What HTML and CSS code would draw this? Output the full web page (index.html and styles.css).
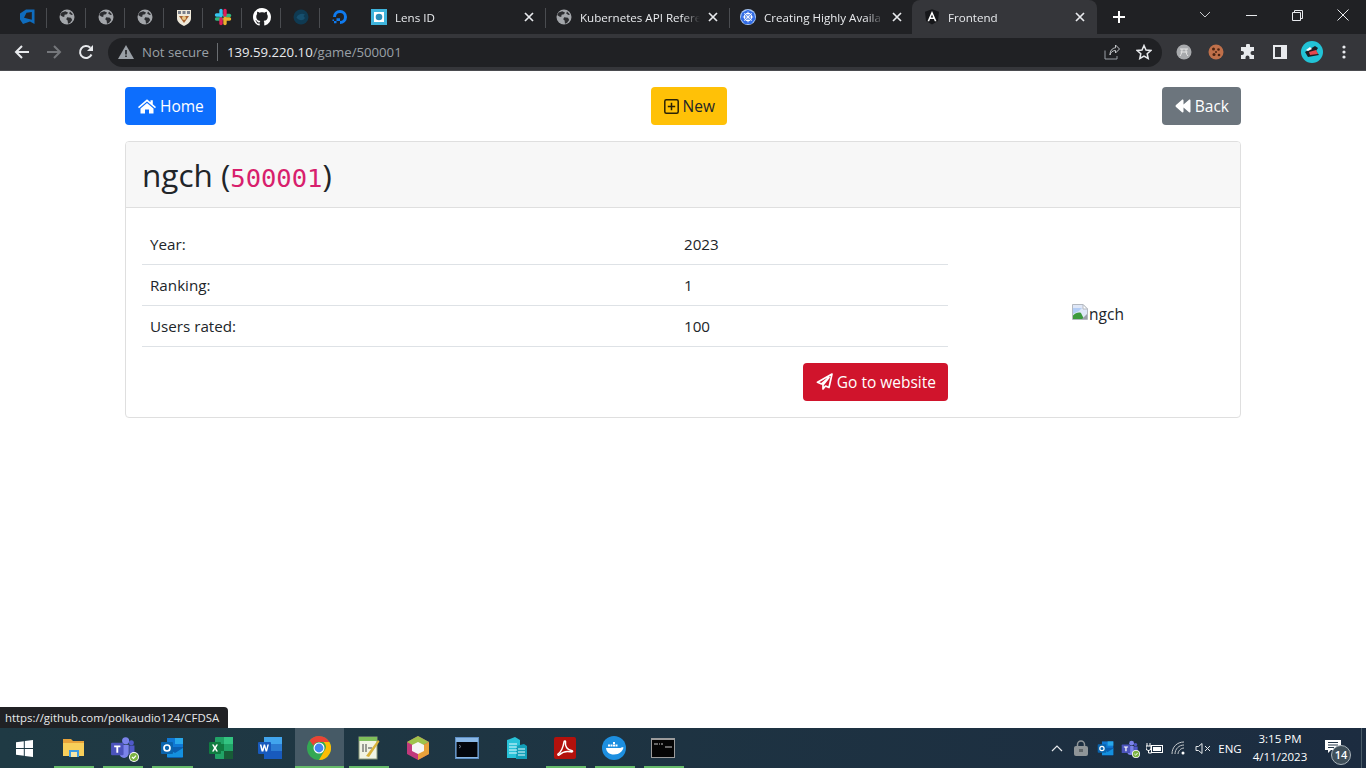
FILE: index.html
```html
<!DOCTYPE html>
<html lang="en">
<head>
<meta charset="utf-8">
<title>Frontend</title>
<link rel="stylesheet" href="styles.css">
</head>
<body>
<svg class="defs" width="0" height="0">
  <symbol id="globe" viewBox="0 0 16 16">
    <circle cx="8" cy="8" r="7.500" fill="#a3a6aa"/>
    <path d="M2.600 3.400 6.200 2.200 9 3.400 8 5.200 5.600 5.800 5.200 8 3.200 7.400 1.200 6ZM8.200 8.200 12 8.800 13.200 11 11 14 9 14.800 8.600 11.600 7.200 10.200ZM11 2.400l3 3-1.600.6-2.200-1.600Z" fill="#2c2d30"/>
  </symbol>
  <symbol id="x" viewBox="0 0 12 12">
    <path d="M2 2l8 8M10 2l-8 8" stroke="#e8eaed" stroke-width="1.700" fill="none"/>
  </symbol>
  <symbol id="teams" viewBox="0 0 24 24">
    <circle cx="15" cy="4.500" r="3.400" fill="#7b83eb"/>
    <circle cx="20.500" cy="6.500" r="2.400" fill="#5059c9"/>
    <path d="M9 8.500h9v8a4.500 4.500 0 0 1-9 0Z" fill="#7b83eb"/>
    <path d="M18.500 9h5v6a3 3 0 0 1-5 2Z" fill="#5059c9"/>
    <rect x="1" y="6.500" width="12" height="12" rx="1" fill="#4b53bc"/>
    <path d="M4 9h6v1.700H7.900V16H6.100V10.700H4Z" fill="#fff"/>
  </symbol>
  <symbol id="outlook" viewBox="0 0 24 24">
    <rect x="7" y="2" width="16" height="11" fill="#0f78d4"/>
    <rect x="15" y="2" width="8" height="6" fill="#28a8ea"/>
    <path d="M7 11h16v10a1 1 0 0 1-1 1H8a1 1 0 0 1-1-1Z" fill="#0a5fb0"/>
    <path d="M7 12l8 5 8-5v9H7Z" fill="#1490df"/>
    <rect x="1" y="6" width="12" height="12" rx="1" fill="#0a64ad"/>
    <circle cx="7" cy="12" r="3" fill="none" stroke="#fff" stroke-width="1.700"/>
  </symbol>
  <symbol id="check" viewBox="0 0 10 10">
    <circle cx="5" cy="5" r="5" fill="#fff"/>
    <circle cx="5" cy="5" r="4" fill="#7cb342"/>
    <path d="M3 5l1.500 1.500L7 3.700" stroke="#fff" fill="none" stroke-width="1.200"/>
  </symbol>
</svg>

<header class="browser">
  <div class="tabstrip">
    <div class="pinned">
      <span class="pin"><svg width="18" height="18" viewBox="0 0 18 18"><path d="M7 1.500 15.500 1.500V16L11 13.500 4 16 1 11.500V5.500Z" fill="#0f6cbd"/><path d="M7.500 4.800 12.800 4V11.800L5 9.800Z" fill="#202124"/></svg></span>
      <span class="pin"><svg width="16" height="16"><use href="#globe"/></svg></span>
      <span class="pin"><svg width="16" height="16"><use href="#globe"/></svg></span>
      <span class="pin"><svg width="16" height="16"><use href="#globe"/></svg></span>
      <span class="pin"><svg width="14" height="17" viewBox="0 0 14 17"><path d="M0 1h14v8c0 4-3 6-7 8-4-2-7-4-7-8Z" fill="#efe9da"/><path d="M1 2h3v3H1ZM5.500 2h3v3h-3ZM10 2h3v3h-3Z" fill="#7a7f8a"/><path d="M2 7h10l-5 7Z" fill="#a8612f"/><circle cx="7" cy="9" r="2" fill="#e9c98a"/></svg></span>
      <span class="pin"><svg width="18" height="18" viewBox="0 0 18 18"><g fill="none" stroke-width="3.400" stroke-linecap="round"><path d="M7 2.500v5" stroke="#36c5f0"/><path d="M2.500 7H7" stroke="#36c5f0"/><path d="M15.500 7.500h-5" stroke="#2eb67d"/><path d="M11 2.500V7" stroke="#e01e5a"/><path d="M11 15.500v-5" stroke="#ecb22e"/><path d="M15.500 11H11" stroke="#ecb22e"/><path d="M2.500 11h5" stroke="#2eb67d"/><path d="M7 15.500V11" stroke="#e01e5a"/></g></svg></span>
      <span class="pin"><svg width="18" height="18" viewBox="0 0 16 16"><path fill="#fff" d="M8 0C3.580 0 0 3.580 0 8c0 3.540 2.290 6.530 5.470 7.590.4.070.55-.17.55-.38 0-.19-.01-.82-.01-1.490-2.010.37-2.530-.49-2.690-.94-.09-.23-.48-.94-.82-1.130-.28-.15-.68-.52-.01-.53.630-.01 1.080.58 1.230.82.720 1.210 1.870.87 2.330.66.070-.52.280-.87.510-1.070-1.780-.2-3.640-.89-3.640-3.950 0-.87.310-1.590.82-2.150-.08-.2-.36-1.020.08-2.120 0 0 .67-.21 2.200.82.640-.18 1.320-.27 2-.27s1.360.09 2 .27c1.530-1.040 2.200-.82 2.200-.82.440 1.100.160 1.920.08 2.120.51.560.82 1.270.82 2.150 0 3.070-1.870 3.750-3.650 3.950.29.250.54.730.54 1.480 0 1.070-.01 1.930-.01 2.200 0 .21.150.46.55.38A8.013 8.013 0 0 0 16 8c0-4.420-3.580-8-8-8Z"/></svg></span>
      <span class="pin"><svg width="16" height="16" viewBox="0 0 16 16"><circle cx="8" cy="8" r="7.500" fill="#0f3a52"/><path d="M3.500 8.500C5 5 9 4 12 5.500L10.500 7 12 9c-2 3-6 3-8.500-.5Z" fill="#164f6e"/></svg></span>
      <span class="pin"><svg width="18" height="18" viewBox="0 0 18 18"><path d="M9 16v-3a4 4 0 1 0-4-4H2a7 7 0 1 1 7 7Z" fill="#0f7bf0"/><path d="M5.500 13H9v-2.800H5.500ZM3 15.200h2.500V13H3ZM1.500 13H3v-1.500H1.500Z" fill="#0f7bf0"/></svg></span>
    </div>
    <div class="tab tab-first">
      <svg class="favicon" width="16" height="16" viewBox="0 0 16 16"><rect width="16" height="16" fill="#3fb4dc"/><rect x="3" y="3" width="10" height="10" fill="#fff"/><circle cx="8" cy="8" r="3.300" fill="#2a8cb8"/></svg>
      <span class="tab-title">Lens ID</span>
      <svg class="tab-close" width="12" height="12"><use href="#x"/></svg>
    </div>
    <div class="tab tab-sep">
      <svg class="favicon" width="16" height="16"><use href="#globe"/></svg>
      <span class="tab-title">Kubernetes API Refere</span>
      <svg class="tab-close" width="12" height="12"><use href="#x"/></svg>
    </div>
    <div class="tab tab-sep">
      <svg class="favicon" width="16" height="16" viewBox="0 0 16 16"><circle cx="8" cy="8" r="8" fill="#a9c8f5"/><path d="M8 .8 14 3.700 15.400 10 11.300 15H4.700L.6 10 2 3.700Z" fill="#326ce5"/><circle cx="8" cy="8" r="3.600" fill="none" stroke="#fff" stroke-width="1.100"/><path d="M8 2.600v10.800M2.800 8h10.400M4.200 4.200l7.600 7.600M11.800 4.200l-7.600 7.600" stroke="#fff" stroke-width=".8"/></svg>
      <span class="tab-title">Creating Highly Availa</span>
      <svg class="tab-close" width="12" height="12"><use href="#x"/></svg>
    </div>
    <div class="tab tab-active">
      <svg class="favicon" width="16" height="16" viewBox="0 0 16 16"><path d="M8 .2 15 2.700 14 12 8 15.600 2 12 1 2.700Z" fill="#16171a"/><path d="M8 2 12.500 12.200H10.800L9.900 10H6.100L5.200 12.200H3.500ZM8 5.600 6.800 8.600H9.200Z" fill="#fff"/></svg>
      <span class="tab-title">Frontend</span>
      <svg class="tab-close" width="12" height="12"><use href="#x"/></svg>
    </div>
    <span class="new-tab"><svg width="14" height="14" viewBox="0 0 14 14"><path d="M7 1v12M1 7h12" stroke="#fff" stroke-width="2"/></svg></span>
    <div class="win-controls">
      <span class="win-btn"><svg width="12" height="8" viewBox="0 0 12 8"><path d="M1 1l5 5 5-5" stroke="#c8cacd" fill="none"/></svg></span>
      <span class="win-btn"><svg width="11" height="11" viewBox="0 0 11 11"><path d="M0 5.500h11" stroke="#e8eaed"/></svg></span>
      <span class="win-btn"><svg width="11" height="11" viewBox="0 0 11 11"><path d="M.5 2.500h8v8h-8ZM2.500 2.500v-2h8v8h-2" stroke="#e8eaed" fill="none"/></svg></span>
      <span class="win-btn"><svg width="12" height="12" viewBox="0 0 12 12"><path d="M.5.500l11 11M11.500.500l-11 11" stroke="#e8eaed" fill="none"/></svg></span>
    </div>
  </div>
  <div class="toolbar">
    <span class="nav-btn"><svg width="16" height="16" viewBox="0 0 16 16"><path d="M15 8H2M8 2 2 8l6 6" stroke="#e8eaed" stroke-width="2" fill="none"/></svg></span>
    <span class="nav-btn"><svg width="16" height="16" viewBox="0 0 16 16"><path d="M1 8h13M8 2l6 6-6 6" stroke="#75777b" stroke-width="2" fill="none"/></svg></span>
    <span class="nav-btn"><svg width="16" height="16" viewBox="0 0 16 16"><path d="M13.500 10.500A6 6 0 1 1 12.300 3.800" stroke="#e8eaed" stroke-width="2" fill="none"/><path d="M15 1v6H9Z" fill="#e8eaed"/></svg></span>
    <div class="omnibox">
      <svg class="warn" width="16" height="14" viewBox="0 0 16 14"><path d="M8 0 16 14H0Z" fill="#9aa0a6"/><path d="M7.200 5h1.600v4.500H7.200ZM7.200 10.500h1.600V12H7.200Z" fill="#202124"/></svg>
      <span class="not-secure">Not secure</span>
      <span class="omni-sep"></span>
      <span class="url">139.59.220.10<span class="url-path">/game/500001</span></span>
      <svg class="omni-share" width="16" height="16" viewBox="0 0 16 16"><path d="M1 6.500V15h12v-3" stroke="#9aa0a6" fill="none"/><path d="M6 11c.5-3 3-4.500 5.500-4.500V9L15.500 5 11.500 1v2.800C8 4 6 7 6 11Z" stroke="#c4c7ca" fill="none"/></svg>
      <svg class="omni-star" width="16" height="16" viewBox="0 0 16 16"><path d="M8 1.500 10 6l4.800.5-3.600 3.200 1 4.800L8 12l-4.200 2.500 1-4.800L1.200 6.500 6 6Z" stroke="#e8eaed" stroke-width="1.500" fill="none"/></svg>
    </div>
    <div class="ext-row">
      <span class="ext"><svg width="16" height="16" viewBox="0 0 16 16"><circle cx="8" cy="8" r="7.500" fill="#a8aaad"/><path d="M4 5h8M6 5c0 3-.5 5-2 7M10 5c0 3 0 5 2 7M4.500 8h7" stroke="#e6e6e6" fill="none"/></svg></span>
      <span class="ext"><svg width="16" height="16" viewBox="0 0 16 16"><circle cx="8" cy="8" r="7.500" fill="#c0704a"/><g fill="#4a2412"><circle cx="5.500" cy="5" r="1.500"/><circle cx="10.500" cy="5.500" r="1.300"/><circle cx="6" cy="10.500" r="1.500"/><circle cx="11" cy="11" r="1.300"/><circle cx="8" cy="8" r="1"/></g></svg></span>
      <span class="ext"><svg width="16" height="16" viewBox="0 0 16 16"><path d="M6 1.500a2 2 0 0 1 4 0V3h4v4h-1.500a2 2 0 0 0 0 4H14v4H9.500v-1.500a2 2 0 0 0-4 0V15H1v-4h1a2 2 0 0 0 0-4H1V3h5Z" fill="#e8eaed"/></svg></span>
      <span class="ext"><svg width="14" height="14" viewBox="0 0 14 14"><rect x="1" y="1" width="12" height="12" fill="none" stroke="#e8eaed" stroke-width="2"/><rect x="8" y="1" width="5" height="12" fill="#e8eaed"/></svg></span>
      <span class="ext"><svg width="22" height="22" viewBox="0 0 22 22"><circle cx="11" cy="11" r="11" fill="#22c3d6"/><path d="M4 11 14 5l3 2-2 3 3 4-11 2Z" fill="#1c1c22"/><path d="M8 11l7-2 2 4-8 1Z" fill="#e5484d"/><path d="M5 9l4-3 2 2-4 2Z" fill="#fff"/></svg></span>
      <span class="ext"><svg width="4" height="14" viewBox="0 0 4 14"><g fill="#e8eaed"><circle cx="2" cy="2" r="1.600"/><circle cx="2" cy="7" r="1.600"/><circle cx="2" cy="12" r="1.600"/></g></svg></span>
    </div>
  </div>
</header>

<main class="page">
  <nav class="actions">
    <a class="btn btn-primary"><svg class="btn-icon" width="18" height="16" viewBox="0 0 18 16"><path d="M9 1.200 12.500 4.200V2.200H14.800V6.200L18 9 17 10.200 9 3.400 1 10.200 0 9Z" fill="#fff"/><path d="M9 5 15.500 10.500V15.500H11V11.500H7V15.500H2.500V10.500Z" fill="#fff"/></svg>Home</a>
    <a class="btn btn-warning"><svg class="btn-icon" width="15" height="15" viewBox="0 0 15 15"><rect x=".8" y=".8" width="13.400" height="13.400" rx="1.500" fill="none" stroke="#2a2206" stroke-width="1.500"/><path d="M7.500 3.800v7.400M3.800 7.500h7.400" stroke="#2a2206" stroke-width="1.500"/></svg>New</a>
    <a class="btn btn-secondary"><svg class="btn-icon" width="16" height="14" viewBox="0 0 15 14"><path d="M15 1.500v11c0 .8-.9 1.200-1.500.7L8 8.500v4c0 .8-.9 1.200-1.500.7L.5 8c-.6-.5-.6-1.500 0-2L6.500.8C7.100.3 8 .7 8 1.500v4L13.500.8C14.100.3 15 .7 15 1.500Z" fill="#fff"/></svg>Back</a>
  </nav>

  <section class="card">
    <div class="card-header">
      <h2 class="game-title">ngch (<code class="game-id">500001</code>)</h2>
    </div>
    <div class="card-body">
      <div class="details">
        <table class="info">
          <tr><td class="info-label">Year:</td><td>2023</td></tr>
          <tr><td class="info-label">Ranking:</td><td>1</td></tr>
          <tr><td class="info-label">Users rated:</td><td>100</td></tr>
        </table>
        <div class="website-row">
          <a class="btn btn-danger"><svg class="btn-icon" width="17" height="17" viewBox="0 0 17 17"><path d="M16 1 1.500 9.300 5.500 11 13 4.500 7 12v4l2.500-3 3.500 1.500Z" fill="none" stroke="#fff" stroke-width="1.700" stroke-linejoin="round"/></svg>Go to website</a>
        </div>
      </div>
      <div class="poster">
        <span class="broken-img"><svg class="broken" width="16" height="16" viewBox="0 0 16 16"><path d="M.5.500H11L15.500 5V15.500H.5Z" fill="#dfe7f7" stroke="#b4b9c0"/><path d="M1 4h9l-3 3-6 3Z" fill="#b3cdf5"/><path d="M1 15v-3.500C3 9 7 8 9 9l3 6Z" fill="#3d9a3d"/><path d="M10 15l5-5v5Z" fill="#9a9ea6"/><path d="M11 .5 15.500 5H11Z" fill="#fff" stroke="#b4b9c0"/></svg><span class="alt">ngch</span></span>
      </div>
    </div>
  </section>
  <div class="status-bubble">https://github.com/polkaudio124/CFDSA</div>
</main>

<footer class="taskbar">
  <span class="task"><svg width="17" height="17" viewBox="0 0 17 17"><path d="M0 2.300 7.800 1.200V8H0ZM8.800 1 17 0V8H8.800ZM0 9H7.800V15.800L0 14.700ZM8.800 9H17V17L8.800 15.900Z" fill="#fff"/></svg></span>
  <span class="task task-on"><svg width="22" height="20" viewBox="0 0 22 20"><path d="M0 1h8l2 2h11v15H0Z" fill="#e8a33a"/><path d="M0 5h21v13H0Z" fill="#f7cf5a"/><rect x="6" y="12" width="10" height="7" fill="#3d9ae0"/><rect x="8" y="14" width="6" height="5" fill="#f7e6a6"/></svg></span>
  <span class="task task-on"><svg width="25" height="25"><use href="#teams"/></svg><svg class="task-badge" width="10" height="10"><use href="#check"/></svg></span>
  <span class="task task-on"><svg width="24" height="24"><use href="#outlook"/></svg></span>
  <span class="task"><svg width="24" height="22" viewBox="0 0 24 22"><rect x="6" y="0" width="18" height="22" rx="1" fill="#21a366"/><rect x="15" y="0" width="9" height="7" fill="#33c481"/><rect x="6" y="7" width="9" height="7" fill="#107c41"/><rect x="15" y="14" width="9" height="8" fill="#185c37"/><rect x="0" y="5" width="12" height="12" rx="1" fill="#107c41"/><path d="M3 7.500h1.800L6 9.800l1.200-2.300H9l-2 3.500 2 3.500H7.200L6 12.200l-1.200 2.300H3l2-3.500Z" fill="#fff"/></svg></span>
  <span class="task"><svg width="24" height="22" viewBox="0 0 24 22"><rect x="6" y="0" width="18" height="22" rx="1" fill="#2b7cd3"/><rect x="6" y="0" width="18" height="7" fill="#41a5ee"/><rect x="6" y="14" width="18" height="8" fill="#185abd"/><rect x="0" y="5" width="13" height="12" rx="1" fill="#185abd"/><path d="M1.800 7.500h1.600l1.100 4.500 1.200-4.500h1.400l1.200 4.500 1.100-4.500h1.500l-1.800 7H7.600L6.500 10.300 5.400 14.500H3.600Z" fill="#fff"/></svg></span>
  <span class="task task-active"><svg width="24" height="24" viewBox="0 0 24 24"><circle cx="12" cy="12" r="12" fill="#34a853"/><path d="M12 0a12 12 0 0 1 10.400 6H12a6 6 0 0 0-5.600 3.800L2.600 4.400A12 12 0 0 1 12 0Z" fill="#ea4335"/><path d="M22.400 6A12 12 0 0 1 12 24l5.200-9a6 6 0 0 0-.7-9Z" fill="#fbbc05"/><circle cx="12" cy="12" r="5.500" fill="#fff"/><circle cx="12" cy="12" r="4.400" fill="#4285f4"/></svg></span>
  <span class="task task-on"><svg width="22" height="24" viewBox="0 0 22 24"><rect x="1" y="1" width="18" height="22" fill="#f1f4e4" stroke="#8a9a7a"/><rect x="1" y="1" width="18" height="4" fill="#7fbf5a"/><path d="M5 8v8M8 8v8M10 12h4" stroke="#444" fill="none"/><path d="M8 20 20 4l1.500 1.500L11 21Z" fill="#d9b23a"/></svg></span>
  <span class="task"><svg width="22" height="24" viewBox="0 0 22 24"><path d="M11 0 22 6v12l-11 6L0 18V6Z" fill="#c2397b"/><path d="M11 0 22 6l-11 6L0 6Z" fill="#9fc24a"/><path d="M22 6v12l-11 6V12Z" fill="#e8a13a"/><path d="M11 6 17 9v6l-6 3-6-3V9Z" fill="#f5f5f5"/></svg></span>
  <span class="task"><svg width="24" height="22" viewBox="0 0 24 22"><rect x=".5" y=".5" width="23" height="21" fill="#8ab8e6" stroke="#5e8fc4"/><rect x="1.500" y="5" width="21" height="15" fill="#03060c"/><path d="M4 8l2 1.500-2 1.500" stroke="#6f7a8a" fill="none"/></svg></span>
  <span class="task"><svg width="24" height="24" viewBox="0 0 24 24"><path d="M3 4 11 1l5 3v18H3Z" fill="#28c2d8"/><path d="M12 10l8-2 3 2v13H12Z" fill="#129fb8"/><path d="M5 8h8M5 11h8M5 14h8M5 17h8M14 13h7M14 16h7M14 19h7" stroke="#e4fbff"/></svg></span>
  <span class="task task-on"><svg width="22" height="22" viewBox="0 0 22 22"><rect width="22" height="22" rx="2" fill="#b3110c"/><path d="M4 17c3-2 5-6 6-12 .3-2 2-1 1.500 1-.7 3 2 7 6 7.500 2 .3 1 1.800-1 1.300-4-1-8 0-11 3-1 1-2 0-1.500-.8Z" fill="none" stroke="#fff" stroke-width="1.500"/></svg></span>
  <span class="task task-on"><svg width="24" height="24" viewBox="0 0 24 24"><circle cx="12" cy="12" r="12" fill="#1d8fe0"/><path d="M4 12h14.500c.8-1 2-1 3-.5-.6 3.500-4 7-9.500 7C7 18.500 4.500 16 4 12Z" fill="#fff"/><path d="M6 8.500h2v2H6ZM8.500 8.500h2v2h-2ZM11 8.500h2v2h-2ZM11 6h2v2h-2ZM13.500 8.500h2v2h-2Z" fill="#fff"/></svg></span>
  <span class="task task-on"><svg width="24" height="20" viewBox="0 0 24 20"><rect width="24" height="20" fill="#9c9c9c"/><rect x="1" y="2" width="22" height="17" fill="#050505"/><path d="M3 6h4M8 6h1M10 6h2M14 9h7" stroke="#c9c9c9" fill="none"/></svg></span>

  <div class="tray">
    <span class="tray-item"><svg width="12" height="7" viewBox="0 0 12 7"><path d="M1 6l5-5 5 5" stroke="#e6e9ec" fill="none" stroke-width="1.200"/></svg></span>
    <span class="tray-item"><svg width="14" height="16" viewBox="0 0 14 16"><path d="M3.500 7V4.500a3.500 3.500 0 0 1 7 0V7" stroke="#8f9598" stroke-width="1.500" fill="none"/><rect y="6" width="14" height="10" rx="2" fill="#8f9598"/><rect x="5" y="9" width="4" height="3" fill="#5f6568"/></svg></span>
    <span class="tray-item"><svg width="17" height="17"><use href="#outlook"/></svg></span>
    <span class="tray-item"><svg width="17" height="17"><use href="#teams"/></svg><svg class="tray-badge" width="8" height="8"><use href="#check"/></svg></span>
    <span class="tray-item"><svg width="17" height="13" viewBox="0 0 17 13"><path d="M1 1v3M4 1v3M0 4h5v2a2.500 2.500 0 0 1-5 0ZM2.500 8v3h3" stroke="#fff" fill="none"/><rect x="5.500" y="3.500" width="11" height="7" fill="none" stroke="#fff"/><rect x="7" y="5" width="8" height="4" fill="#fff"/></svg></span>
    <span class="tray-item"><svg width="15" height="14" viewBox="0 0 15 14"><path d="M1 13C1 6 6 1 13 1M4 13c0-5 4-9 9-9M7 13c0-3 3-6 6-6" stroke="#c4c9cc" fill="none"/><circle cx="12" cy="12" r="1.500" fill="#fff"/></svg></span>
    <span class="tray-item tray-sound"><svg width="16" height="13" viewBox="0 0 16 13"><path d="M1 4.500h2.500L7 1.500v10l-3.500-3H1Z" stroke="#e6e9ec" fill="none"/><path d="M10 4l5 5M15 4l-5 5" stroke="#e6e9ec" fill="none"/></svg></span>
    <span class="tray-lang">ENG</span>
    <span class="tray-clock"><span>3:15 PM</span><span>4/11/2023</span></span>
    <span class="tray-notify">
      <svg width="16" height="14" viewBox="0 0 16 14"><path d="M0 0h16v10H6l-3 3v-3H0Z" fill="#fff"/><path d="M3 2.500h10M3 5h10M3 7.500h6" stroke="#26384a"/></svg>
      <span class="notify-count">14</span>
    </span>
  </div>
</footer>
</body>
</html>
```
FILE: styles.css
```css
* { box-sizing: border-box; }
html, body { height: 100%; }
body {
  margin: 0;
  height: 768px;
  width: 1366px;
  overflow: hidden;
  display: flex;
  flex-direction: column;
  background: #fff;
  color: #212529;
  font-family: "Open Sans", "Noto Sans", "Liberation Sans", sans-serif;
  font-size: 15.500px;
}
.defs { position: absolute; }

/* browser chrome */
.browser { flex: none; height: 71px; background: #35363a; border-bottom: 1px solid #4a4b4f; color: #e8eaed; }
.tabstrip { display: flex; height: 34px; background: #202124; padding-left: 8px; font-size: 11.600px; align-items: flex-start; }
.pinned { display: flex; width: 352px; height: 34px; }
.pin { width: 39px; height: 34px; display: flex; align-items: center; justify-content: center; position: relative; }
.pin:not(:last-child)::after,
.tab-sep::before {
  content: "";
  position: absolute;
  right: 0;
  top: 8px;
  height: 20px;
  width: 1px;
  background: #4a4c50;
}
.tab { width: 184px; height: 34px; display: flex; align-items: center; padding: 0 10px 0 19px; position: relative; }
.tab-first { width: 185px; padding-left: 19px; }
.tab-sep::before { left: 0; right: auto; }
.favicon { flex: none; margin-left: -8px; }
.tab-title {
  flex: 1;
  margin-left: 8px;
  white-space: nowrap;
  overflow: hidden;
  -webkit-mask-image: linear-gradient(to right, #000 85%, transparent 100%);
  mask-image: linear-gradient(to right, #000 85%, transparent 100%);
  color: #e8eaed;
}
.tab-close { flex: none; margin-left: 7px; }
.tab-active { background: #35363a; border-radius: 8px 8px 0 0; height: 34px; width: 185px; margin-left: -1px; padding-left: 20px; padding-right: 11px; }
.new-tab { width: 44px; height: 34px; display: flex; align-items: center; justify-content: center; }
.win-controls { margin-left: auto; display: flex; height: 30px; }
.win-btn { width: 46px; display: flex; align-items: center; justify-content: center; }
.toolbar { display: flex; align-items: center; height: 36px; padding: 0 0 0 6px; }
.nav-btn { width: 32px; display: flex; align-items: center; justify-content: center; }
.omnibox {
  margin-left: 6px;
  width: 1054px;
  height: 29px;
  border-radius: 15px;
  background: #202124;
  display: flex;
  align-items: center;
  padding: 0 10px;
  font-size: 13.200px;
}
.not-secure { margin-left: 8px; color: #9aa0a6; }
.omni-sep { width: 1px; height: 18px; background: #6a6d71; margin: 0 9px 0 8px; }
.url { color: #e8eaed; }
.url-path { color: #9aa0a6; }
.omni-share { margin-left: auto; margin-right: 16px; }
.ext-row { display: flex; margin-left: 6px; }
.ext { width: 32px; display: flex; align-items: center; justify-content: center; }

/* page */
.page { flex: 1; padding: 16px 125px 0; position: relative; min-height: 0; }
.actions { display: flex; justify-content: space-between; margin-bottom: 16px; }
.btn {
  display: inline-flex;
  align-items: center;
  height: 38px;
  padding: 0 12px 0 13px;
  border-radius: 4px;
  white-space: nowrap;
}
.btn-icon { margin-right: 4px; flex: none; }
.btn-primary { background: #0d6efd; color: #fff; }
.btn-warning { background: #ffc107; color: #212529; }
.btn-secondary { background: #6c757d; color: #fff; }
.btn-danger { background: #d0142c; color: #fff; }
.card { border: 1px solid #dfdfdf; border-radius: 4px; height: 277px; }
.card-header { height: 66px; background: #f7f7f7; border-bottom: 1px solid #dfdfdf; padding: 3px 16px 0; display: flex; align-items: center; border-radius: 3px 3px 0 0; }
.game-title { margin: 0; font-size: 31.500px; font-weight: 400; line-height: 38px; }
.game-id { font-family: "DejaVu Sans Mono", "Liberation Mono", monospace; font-size: 25.500px; color: #d81f6d; }
.card-body { display: flex; padding: 15px 16px 16px; }
.details { width: 806px; flex: none; }
.info { width: 100%; border-collapse: collapse; font-size: 15.200px; }
.info tr { height: 41px; border-bottom: 1px solid #dee2e6; }
.info td { padding: 0 8px; }
.info tr:first-child td { padding-top: 1px; }
.info-label { width: 534px; }
.website-row { display: flex; justify-content: flex-end; margin-top: 16px; }
.poster { flex: 1; padding: 5px 0 0 24px; display: flex; align-items: center; justify-content: center; }
.broken { vertical-align: baseline; }
.alt { margin-left: 1px; }
.status-bubble {
  position: absolute;
  left: 0;
  bottom: 0;
  height: 21px;
  width: 228px;
  padding: 0 0 0 5px;
  line-height: 21px;
  background: #202124;
  color: #e8eaed;
  font-size: 11.400px;
  border-radius: 0 4px 0 0;
  white-space: nowrap;
}

/* taskbar */
.taskbar { flex: none; height: 40px; background: linear-gradient(to right, #1f3a44, #1c2c40); display: flex; color: #fff; font-size: 11.500px; }
.task { width: 49.150px; flex: none; display: flex; align-items: center; justify-content: center; position: relative; }
.task-on::after {
  content: "";
  position: absolute;
  left: 5px;
  right: 4px;
  bottom: 0;
  height: 2px;
  background: #66bb6a;
}
.task-active { background: #465a66; }
.task-active::after {
  content: "";
  position: absolute;
  left: 0;
  right: 0;
  bottom: 0;
  height: 2px;
  background: #66bb6a;
}
.task-badge { position: absolute; right: 8px; bottom: 6px; }
.tray { margin-left: auto; margin-right: 4px; display: flex; align-items: center; padding-right: 9px; border-right: 1px solid #4a5c68; }
.tray-item { width: 24.300px; flex: none; display: flex; align-items: center; justify-content: center; position: relative; }
.tray-sound { margin-right: -1px; }
.tray-badge { position: absolute; right: 2px; bottom: -1px; }
.tray-lang { width: 32px; flex: none; text-align: center; }
.tray-clock { width: 68px; flex: none; display: flex; flex-direction: column; align-items: center; line-height: 18px; }
.tray-notify { width: 38px; flex: none; position: relative; display: flex; justify-content: center; padding-bottom: 2px; }
.notify-count {
  position: absolute;
  right: 1px;
  top: 5px;
  width: 20px;
  height: 20px;
  border-radius: 50%;
  background: #3f4f5a;
  border: 1px solid #aab4bb;
  font-size: 11px;
  font-weight: 600;
  line-height: 18px;
  text-align: center;
}
```
